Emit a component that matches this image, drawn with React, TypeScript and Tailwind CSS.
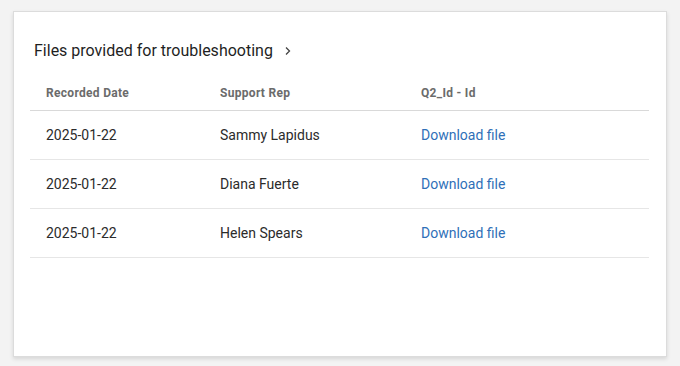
import React from "react";

const rows = [
  { date: "2025-01-22", rep: "Sammy Lapidus" },
  { date: "2025-01-22", rep: "Diana Fuerte" },
  { date: "2025-01-22", rep: "Helen Spears" },
];

export default function App() {
  return (
    <div className="w-[680px] h-[366px] bg-[#f3f3f3] pt-[11px] pl-[13px]" style={{ fontFamily: 'Roboto, "Noto Sans", sans-serif' }}>
      <div className="w-[654px] h-[346px] bg-white border border-[#dcdcdc] shadow-[0_2px_4px_rgba(0,0,0,0.12)] px-[16px] pt-[27px]">
        <div className="flex items-center h-[24px] pl-[4px] text-[16px] text-[#1f1f1f]">
          <span>Files provided for troubleshooting</span>
          <svg className="ml-[10px]" width="10" height="10" viewBox="0 0 10 10" fill="none">
            <path d="M3 1.5 L6.5 5 L3 8.5" stroke="#444" strokeWidth="1.3" />
          </svg>
        </div>
        <div className="mt-[15px] w-[619px]">
          <div className="flex h-[33px] border-b border-[#d9d9d9] text-[12px] font-bold tracking-[0.3px] text-[#6b6b6b] items-start pt-[6px]">
            <div className="w-[174px] pl-[16px]">Recorded Date</div>
            <div className="w-[201px] pl-[16px]">Support Rep</div>
            <div className="flex-1 pl-[16px]">Q2_Id - Id</div>
          </div>
          {rows.map((r, i) => (
            <div key={i} className="flex items-center h-[49px] border-b border-[#e6e6e6] text-[14px] text-[#2b2b2b]">
              <div className="w-[174px] pl-[16px]">{r.date}</div>
              <div className="w-[201px] pl-[16px]">{r.rep}</div>
              <div className="flex-1 pl-[16px] text-[#2f6fb8]">Download file</div>
            </div>
          ))}
        </div>
      </div>
    </div>
  );
}
